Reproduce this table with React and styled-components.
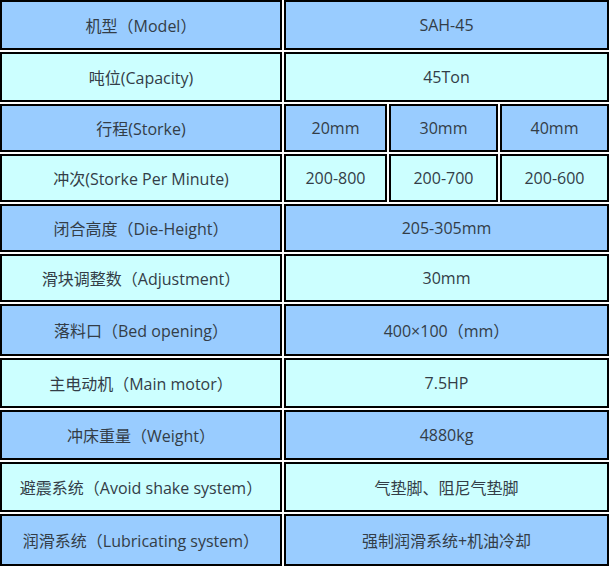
import { createGlobalStyle, styled } from 'styled-components'

const GlobalStyle = createGlobalStyle`
  body {
    margin: 0;
    background: #fff;
    font-family: 'Open Sans', 'Noto Sans CJK SC', sans-serif;
  }
`

const rows = [
  { label: '机型（Model）', values: ['SAH-45'], h: 50 },
  { label: '吨位(Capacity)', values: ['45Ton'], h: 50 },
  { label: '行程(Storke)', values: ['20mm', '30mm', '40mm'], h: 48 },
  { label: '冲次(Storke Per Minute)', values: ['200-800', '200-700', '200-600'], h: 48 },
  { label: '闭合高度（Die-Height）', values: ['205-305mm'], h: 48 },
  { label: '滑块调整数（Adjustment）', values: ['30mm'], h: 48 },
  { label: '落料口（Bed opening）', values: ['400×100（mm）'], h: 52 },
  { label: '主电动机（Main motor）', values: ['7.5HP'], h: 50 },
  { label: '冲床重量（Weight）', values: ['4880kg'], h: 50 },
  { label: '避震系统（Avoid shake system）', values: ['气垫脚、阻尼气垫脚'], h: 50 },
  { label: '润滑系统（Lubricating system）', values: ['强制润滑系统+机油冷却'], h: 52 },
]

const App = () => {
  return (
    <>
      <GlobalStyle />
      <Table>
        {rows.map((row, i) => (
          <Row key={row.label} $h={row.h}>
            <Cell $alt={i % 2 === 1}>{row.label}</Cell>
            <Values $split={row.values.length > 1}>
              {row.values.map((v) => (
                <Cell key={v} $alt={i % 2 === 1}>{v}</Cell>
              ))}
            </Values>
          </Row>
        ))}
      </Table>
    </>
  )
}

export default App

const Table = styled.div`
  width: 609px;
  display: flex;
  flex-direction: column;
  gap: 2px;
`
const Row = styled.div`
  display: grid;
  grid-template-columns: 282px 325px;
  gap: 2px;
  height: ${(p) => p.$h}px;
`
const Values = styled.div`
  display: grid;
  grid-template-columns: ${(p) => (p.$split ? '103px 109px 109px' : '1fr')};
  gap: 2px;
`
const Cell = styled.div`
  box-sizing: border-box;
  border: 2px solid #000;
  background: ${(p) => (p.$alt ? '#ccffff' : '#99ccff')};
  color: #333d47;
  font-size: 16px;
  display: flex;
  align-items: center;
  justify-content: center;
  white-space: nowrap;
`
